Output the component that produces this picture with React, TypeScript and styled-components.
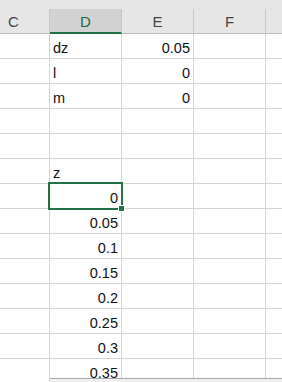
import React from 'react';
import styled, { createGlobalStyle } from 'styled-components';

const GlobalStyle = createGlobalStyle`
  html, body {
    margin: 0;
    padding: 0;
    height: 382px;
    overflow: hidden;
    background: #ffffff;
  }
  * {
    box-sizing: border-box;
  }
`;

const Sheet = styled.div`
  position: relative;
  width: 282px;
  height: 382px;
  overflow: hidden;
  font-family: 'Liberation Sans', Arial, sans-serif;
  background: #ffffff;
`;

const TopBand = styled.div`
  height: 9px;
  background: #e6e6e6;
`;

const Row = styled.div`
  display: grid;
  grid-template-columns: repeat(5, 72px);
  margin-left: -22px;
`;

const HeadCell = styled.div<{ $active?: boolean }>`
  height: 25px;
  background: ${p => (p.$active ? '#d2d2d2' : '#e6e6e6')};
  border-right: 1px solid #c8c8c8;
  border-bottom: ${p => (p.$active ? '2px solid #217346' : '1px solid #bdbdbd')};
  display: flex;
  align-items: center;
  justify-content: center;
  font-size: 15px;
  color: ${p => (p.$active ? '#1d6a40' : '#444444')};
  padding-top: ${p => (p.$active ? '1px' : '0')};
`;

const Cell = styled.div<{ $num?: boolean }>`
  position: relative;
  height: 25px;
  border-right: 1px solid #d4d4d4;
  border-bottom: 1px solid #d4d4d4;
  padding: 4px 3px 0 3px;
  font-size: 14.5px;
  line-height: 20px;
  color: #111111;
  text-align: ${p => (p.$num ? 'right' : 'left')};
  white-space: nowrap;
`;

const Selection = styled.div`
  position: absolute;
  z-index: 2;
  left: -2px;
  top: -2px;
  right: -2px;
  bottom: -2px;
  border: 2px solid #217346;
  pointer-events: none;
`;

const Handle = styled.div`
  position: absolute;
  right: -4px;
  bottom: -4px;
  width: 7px;
  height: 7px;
  background: #217346;
  border: 1px solid #ffffff;
`;

const ScrollBar = styled.div`
  position: absolute;
  z-index: 3;
  left: 50px;
  right: 0;
  top: 378px;
  height: 4px;
  background: #f0f0f0;
  border-top: 1px solid #a8a8a8;
`;

type CellValue = { text: string; num?: boolean };

const rows: { d?: CellValue; e?: CellValue; selected?: boolean }[] = [
  { d: { text: 'dz' }, e: { text: '0.05', num: true } },
  { d: { text: 'l' }, e: { text: '0', num: true } },
  { d: { text: 'm' }, e: { text: '0', num: true } },
  {},
  {},
  { d: { text: 'z' } },
  { d: { text: '0', num: true }, selected: true },
  { d: { text: '0.05', num: true } },
  { d: { text: '0.1', num: true } },
  { d: { text: '0.15', num: true } },
  { d: { text: '0.2', num: true } },
  { d: { text: '0.25', num: true } },
  { d: { text: '0.3', num: true } },
  { d: { text: '0.35', num: true } },
];

const App: React.FC = () => {
  return (
    <Sheet>
      <GlobalStyle />
      <TopBand />
      <Row>
        <HeadCell>C</HeadCell>
        <HeadCell $active>D</HeadCell>
        <HeadCell>E</HeadCell>
        <HeadCell>F</HeadCell>
        <HeadCell />
      </Row>
      {rows.map((r, i) => (
        <Row key={i}>
          <Cell />
          <Cell $num={r.d?.num}>
            {r.d?.text}
            {r.selected && (
              <Selection>
                <Handle />
              </Selection>
            )}
          </Cell>
          <Cell $num={r.e?.num}>{r.e?.text}</Cell>
          <Cell />
          <Cell />
        </Row>
      ))}
      <ScrollBar />
    </Sheet>
  );
};

export default App;
